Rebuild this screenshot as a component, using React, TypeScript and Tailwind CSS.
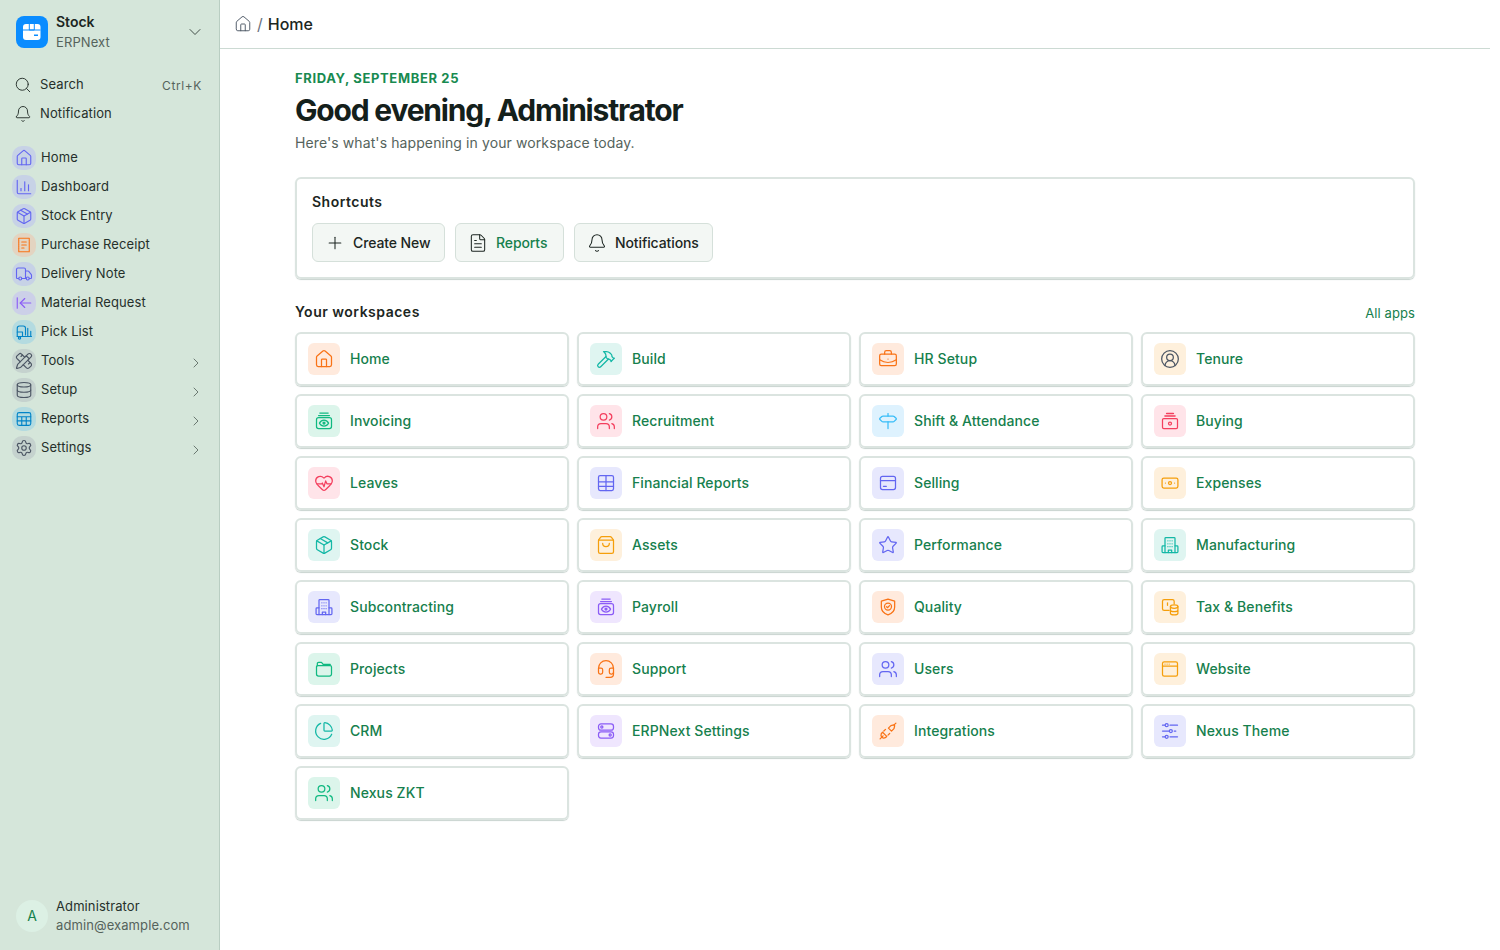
import { ReactNode } from "react";
import {
  ArrowLeftToLine,
  Bell,
  BriefcaseBusiness,
  ChartColumn,
  ChartPie,
  ChevronDown,
  ChevronRight,
  CircleUserRound,
  Database,
  FileText,
  Hammer,
  Headset,
  HeartPulse,
  House,
  Package,
  PencilRuler,
  Plus,
  Search,
  Settings,
  ShoppingBag,
  Signpost,
  Star,
  Truck,
  Users,
} from "lucide-react";

type IconProps = { className?: string; strokeWidth?: number };

function Svg({ className, children }: { className?: string; children: ReactNode }) {
  return (
    <svg
      viewBox="0 0 24 24"
      fill="none"
      stroke="currentColor"
      strokeWidth={1.5}
      strokeLinecap="round"
      strokeLinejoin="round"
      className={className}
    >
      {children}
    </svg>
  );
}

function Logo() {
  return (
    <svg viewBox="0 0 32 32" className="h-8 w-8">
      <rect x="7" y="8" width="17.500" height="16" rx="3" fill="#fff" />
      <path d="M13.300 8v6h5V8" fill="none" stroke="#0a8cff" strokeWidth="1" />
      <path d="M7 14h17.500" stroke="#0a8cff" strokeWidth="1" />
      <rect x="18" y="18.500" width="4" height="1.500" fill="#0a8cff" />
    </svg>
  );
}

function ReceiptIcon({ className }: IconProps) {
  return (
    <Svg className={className}>
      <path d="M5 3h14v18H5z" strokeDasharray="2 0.6" />
      <path d="M9 8h6M9 12h6M9 16h3" />
    </Svg>
  );
}

function PickIcon({ className }: IconProps) {
  return (
    <Svg className={className}>
      <path d="M3 18V7a3 3 0 0 1 3-3h5a3 3 0 0 1 3 3v9" />
      <path d="M3 12h7v6H3" />
      <path d="M17 7v11M21 11v7M5 18h17" />
      <circle cx="6" cy="20" r="1.500" />
    </Svg>
  );
}

function SheetIcon({ className }: IconProps) {
  return (
    <Svg className={className}>
      <rect x="3" y="3.500" width="18" height="17" rx="2.500" />
      <path d="M3 9h18M3 14.500h18M9 9v11.500M15 9v11.500" />
    </Svg>
  );
}

function GridIcon({ className }: IconProps) {
  return (
    <Svg className={className}>
      <rect x="3" y="3" width="18" height="18" rx="2" />
      <path d="M3 10.500h18M3 16h18M12 3v18" />
    </Svg>
  );
}

function CashStackIcon({ className }: IconProps) {
  return (
    <Svg className={className}>
      <path d="M7 2.500h10M5.500 5.500h13" />
      <rect x="3" y="8" width="18" height="13" rx="2.500" />
      <circle cx="12" cy="14.500" r="1.200" fill="currentColor" />
      <path d="M6.500 14.500c1.500-2.500 3.500-3.500 5.500-3.500s4 1 5.500 3.500c-1.500 2.500-3.500 3.500-5.500 3.500s-4-1-5.500-3.500z" />
    </Svg>
  );
}

function BuyingIcon({ className }: IconProps) {
  return (
    <Svg className={className}>
      <path d="M8 3h8M6 6h12" strokeWidth={2} />
      <rect x="3" y="9" width="18" height="12" rx="1.500" />
      <circle cx="12" cy="15" r="1.800" />
    </Svg>
  );
}

function CardIcon({ className }: IconProps) {
  return (
    <Svg className={className}>
      <rect x="3" y="4" width="18" height="16" rx="2.500" />
      <path d="M3 9h18M6.500 16h3.500" />
    </Svg>
  );
}

function MoneyIcon({ className }: IconProps) {
  return (
    <Svg className={className}>
      <rect x="2.500" y="6" width="19" height="12" rx="2" />
      <circle cx="12" cy="12" r="1.800" />
      <path d="M6.500 12h.01M17.500 12h.01" />
    </Svg>
  );
}

function BuildingIcon({ className }: IconProps) {
  return (
    <Svg className={className}>
      <path d="M6 21V4a1 1 0 0 1 1-1h10a1 1 0 0 1 1 1v17" />
      <path d="M6 13H3.500a1 1 0 0 0-1 1v6a1 1 0 0 0 1 1h17a1 1 0 0 0 1-1v-6a1 1 0 0 0-1-1H18" />
      <path d="M9.500 7h.01M14.500 7h.01M9.500 10.500h.01M14.500 10.500h.01M9.500 14h.01M14.500 14h.01M12 7h.01M12 10.500h.01M12 14h.01M10 21v-3h4v3" />
    </Svg>
  );
}

function ShieldIcon({ className }: IconProps) {
  return (
    <Svg className={className}>
      <path d="M12 2.500 20 5v7c0 5-3.500 8-8 9.500C7.500 20 4 17 4 12V5z" />
      <circle cx="12" cy="11.500" r="4.200" />
      <path d="m10.300 11.600 1.300 1.200 2.200-2.400" />
    </Svg>
  );
}

function TaxIcon({ className }: IconProps) {
  return (
    <Svg className={className}>
      <path d="M11 16H5a2 2 0 0 1-2-2V5a2 2 0 0 1 2-2h10a2 2 0 0 1 2 2v3" />
      <path d="M9 7v3" />
      <ellipse cx="17" cy="11.500" rx="4.500" ry="2" />
      <path d="M12.500 11.500v8c0 1.100 2 2 4.500 2s4.500-.9 4.500-2v-8M12.500 15.500c0 1.100 2 2 4.500 2s4.500-.9 4.500-2" />
    </Svg>
  );
}

function WindowIcon({ className }: IconProps) {
  return (
    <Svg className={className}>
      <rect x="3" y="3.500" width="18" height="17" rx="2" />
      <path d="M3 8.500h18M6 6h.01M8.500 6h.01M11 6h.01" />
    </Svg>
  );
}

function TogglesIcon({ className }: IconProps) {
  return (
    <Svg className={className}>
      <rect x="3" y="3.500" width="18" height="7.500" rx="3" />
      <rect x="3" y="13" width="18" height="7.500" rx="3" />
      <circle cx="7" cy="7.200" r="1.300" />
      <circle cx="17" cy="16.800" r="1.300" />
    </Svg>
  );
}

function PlugIcon({ className }: IconProps) {
  return (
    <Svg className={className}>
      <path d="m2.500 21.500 3.600-3.600M21.500 2.500l-2.200 2.200" />
      <path d="m15.500 5.500 3.500-.8 1 1-.8 3.500-3 3-3.700-3.700z" />
      <path d="m5.500 13.500 5 5-1.800 1.500c-1.500.8-3 .4-4-.7-1-1-1.400-2.500-.8-4z" />
      <path d="m7 12 2-2M12 17l2-2" />
    </Svg>
  );
}

function FolderIcon({ className }: IconProps) {
  return (
    <Svg className={className}>
      <path d="M4 8V5.500A1.500 1.500 0 0 1 5.500 4H9l2 2.500h8.500" />
      <path d="M3 9.500A1.500 1.500 0 0 1 4.500 8h15A1.500 1.500 0 0 1 21 9.500V18a2.500 2.500 0 0 1-2.500 2.500h-13A2.500 2.500 0 0 1 3 18z" />
    </Svg>
  );
}

function SlidersIcon({ className }: IconProps) {
  return (
    <Svg className={className}>
      <circle cx="8" cy="5" r="1.800" />
      <circle cx="13" cy="12" r="1.800" />
      <circle cx="8" cy="19" r="1.800" />
      <path d="M3 5h3M12 5h9M3 12h8M17 12h2M3 19h3M12 19h9" />
    </Svg>
  );
}

const sideItems = [
  { label: "Home", Icon: House, tile: "bg-[#c7d2e6]", ink: "text-[#6366f1]" },
  { label: "Dashboard", Icon: ChartColumn, tile: "bg-[#c7d2e6]", ink: "text-[#6366f1]" },
  { label: "Stock Entry", Icon: Package, tile: "bg-[#c7d2e6]", ink: "text-[#6366f1]" },
  { label: "Purchase Receipt", Icon: ReceiptIcon, tile: "bg-[#e3d4c1]", ink: "text-[#f97316]" },
  { label: "Delivery Note", Icon: Truck, tile: "bg-[#c7d2e6]", ink: "text-[#6366f1]" },
  { label: "Material Request", Icon: ArrowLeftToLine, tile: "bg-[#ccd0e8]", ink: "text-[#8b5cf6]" },
  { label: "Pick List", Icon: PickIcon, tile: "bg-[#b4dbe0]", ink: "text-[#0284c7]" },
  { label: "Tools", Icon: PencilRuler, tile: "bg-[#c5d2ce]", ink: "text-[#4b5563]", more: true },
  { label: "Setup", Icon: Database, tile: "bg-[#c5d2ce]", ink: "text-[#4b5563]", more: true },
  { label: "Reports", Icon: SheetIcon, tile: "bg-[#b4dbe0]", ink: "text-[#0284c7]", more: true },
  { label: "Settings", Icon: Settings, tile: "bg-[#c5d2ce]", ink: "text-[#4b5563]", more: true },
];

const orange = { tile: "bg-[#ffeadd]", ink: "text-[#f97316]" };
const teal = { tile: "bg-[#dff5f1]", ink: "text-[#14b8a6]" };
const emerald = { tile: "bg-[#dcf5eb]", ink: "text-[#10b981]" };
const amber = { tile: "bg-[#fef0dc]", ink: "text-[#f59e0b]" };
const rose = { tile: "bg-[#ffe4e9]", ink: "text-[#f43f5e]" };
const indigo = { tile: "bg-[#e7e8fd]", ink: "text-[#6366f1]" };
const violet = { tile: "bg-[#efe6fe]", ink: "text-[#8b5cf6]" };
const sky = { tile: "bg-[#def2fe]", ink: "text-[#38bdf8]" };

const workspaces = [
  { label: "Home", Icon: House, ...orange },
  { label: "Build", Icon: Hammer, ...teal },
  { label: "HR Setup", Icon: BriefcaseBusiness, ...orange },
  { label: "Tenure", Icon: CircleUserRound, tile: "bg-[#fef0dc]", ink: "text-[#4b5563]" },
  { label: "Invoicing", Icon: CashStackIcon, ...emerald },
  { label: "Recruitment", Icon: Users, ...rose },
  { label: "Shift & Attendance", Icon: Signpost, ...sky },
  { label: "Buying", Icon: BuyingIcon, ...rose },
  { label: "Leaves", Icon: HeartPulse, ...rose },
  { label: "Financial Reports", Icon: GridIcon, ...indigo },
  { label: "Selling", Icon: CardIcon, ...indigo },
  { label: "Expenses", Icon: MoneyIcon, ...amber },
  { label: "Stock", Icon: Package, ...teal },
  { label: "Assets", Icon: ShoppingBag, ...amber },
  { label: "Performance", Icon: Star, ...indigo },
  { label: "Manufacturing", Icon: BuildingIcon, ...teal },
  { label: "Subcontracting", Icon: BuildingIcon, ...indigo },
  { label: "Payroll", Icon: CashStackIcon, ...violet },
  { label: "Quality", Icon: ShieldIcon, ...orange },
  { label: "Tax & Benefits", Icon: TaxIcon, ...amber },
  { label: "Projects", Icon: FolderIcon, ...emerald },
  { label: "Support", Icon: Headset, ...orange },
  { label: "Users", Icon: Users, ...indigo },
  { label: "Website", Icon: WindowIcon, ...amber },
  { label: "CRM", Icon: ChartPie, ...teal },
  { label: "ERPNext Settings", Icon: TogglesIcon, ...violet },
  { label: "Integrations", Icon: PlugIcon, ...orange },
  { label: "Nexus Theme", Icon: SlidersIcon, ...indigo },
  { label: "Nexus ZKT", Icon: Users, ...emerald },
];

function Sidebar() {
  return (
    <aside className="flex h-[950px] w-[220px] shrink-0 flex-col justify-between border-r border-[#b9cec2] bg-[#d5e6da] text-[#25302b]">
      <div>
        <div className="flex items-center gap-2 pl-4 pr-[14px] pt-[13px]">
          <div className="h-8 w-8 rounded-lg bg-[#0a8cff]">
            <Logo />
          </div>
          <div className="flex-1 leading-none">
            <div className="text-sm font-semibold leading-[18px] text-[#1c2622]">Stock</div>
            <div className="mt-[3px] text-[13px] leading-4 tracking-[0.1px] text-[#55635c]">ERPNext</div>
          </div>
          <ChevronDown className="h-5 w-5" strokeWidth={1} />
        </div>

        <div className="mt-5 flex h-[29px] items-center gap-2 pl-[14px] pr-[17px] text-[13px] tracking-[0.1px]">
          <Search className="h-[18px] w-[18px]" strokeWidth={1.25} />
          <span className="flex-1">Search</span>
          <span className="mt-[3px] text-xs tracking-[0.6px] text-[#55635c]">Ctrl+K</span>
        </div>
        <div className="flex h-[29px] items-center gap-2 pl-[14px] text-[13px] tracking-[0.1px]">
          <Bell className="h-[18px] w-[18px]" strokeWidth={1.25} />
          <span>Notification</span>
        </div>

        <nav className="mt-[15px] px-3">
          {sideItems.map(({ label, Icon, tile, ink, more }) => (
            <div key={label} className="flex h-[29px] items-center gap-[5px] text-[13px] tracking-[0.1px]">
              <span className={`flex h-6 w-6 items-center justify-center rounded-[10px] ${tile} ${ink}`}>
                <Icon className="h-[18px] w-[18px]" strokeWidth={1.5} />
              </span>
              <span className="flex-1">{label}</span>
              {more && <ChevronRight className="mr-[3px] mt-1 h-4 w-4 text-[#55635c]" strokeWidth={1.25} />}
            </div>
          ))}
        </nav>
      </div>

      <div className="flex items-center gap-2 pb-[15px] pl-4">
        <div className="flex h-8 w-8 items-center justify-center rounded-full bg-[#dcf0e4] text-sm text-[#16804d]">A</div>
        <div className="text-[13px] leading-[19px] tracking-[0.1px]">
          <div className="text-[#25302b]">Administrator</div>
          <div className="text-[#55635c]">admin@example.com</div>
        </div>
      </div>
    </aside>
  );
}

function Shortcut({ icon, label, className }: { icon: ReactNode; label: string; className: string }) {
  return (
    <button className={`flex h-[39px] items-center gap-2 rounded-md border border-[#d5e0da] bg-[#f3f7f4] pl-3 text-sm font-medium tracking-[-0.1px] ${className}`}>
      {icon}
      {label}
    </button>
  );
}

export default function App() {
  return (
    <div className="flex h-[950px] w-[1500px] overflow-hidden bg-white font-['Inter',sans-serif]">
      <Sidebar />
      <main className="w-[1270px]">
        <header className="flex h-[49px] items-center gap-[5px] border-b border-[#ccdad3] pl-[14px] text-[#1c2622]">
          <House className="h-[18px] w-[18px] text-[#4b5563]" strokeWidth={1.25} />
          <span className="text-[#6b7280]">/</span>
          <span className="text-base font-medium">Home</span>
        </header>

        <div className="mx-auto w-[1120px] pt-[21px]">
          <div className="text-[13px] font-bold uppercase leading-4 tracking-[0.65px] text-[#188a50]">Friday, September 25</div>
          <h1 className="mt-[6px] text-[30px] font-bold leading-[36px] tracking-[-1.2px] text-[#14201b]">Good evening, Administrator</h1>
          <p className="mt-[5px] text-sm leading-5 tracking-[0.1px] text-[#55635c]">Here's what's happening in your workspace today.</p>

          <section className="mt-6 rounded-md border-2 border-[#dbe4e0] p-[15px] shadow-[0_1px_1px_#c8d3cf]">
            <h2 className="text-sm font-semibold leading-4 tracking-[0.5px] text-[#1c2622]">Shortcuts</h2>
            <div className="mt-[13px] flex gap-[10px]">
              <Shortcut className="w-[133px] text-[#1c2622]" icon={<Plus className="h-5 w-5" strokeWidth={1.25} />} label="Create New" />
              <Shortcut className="w-[109px] text-[#16804d]" icon={<FileText className="h-5 w-5 text-[#1c2622]" strokeWidth={1.25} />} label="Reports" />
              <Shortcut className="w-[139px] text-[#1c2622]" icon={<Bell className="h-5 w-5" strokeWidth={1.25} />} label="Notifications" />
            </div>
          </section>

          <div className="mt-6 flex items-start justify-between">
            <h2 className="text-sm font-semibold leading-[18px] tracking-[0.5px] text-[#1c2622]">Your workspaces</h2>
            <span className="mt-[1px] text-[13px] leading-[18px] tracking-[0.1px] text-[#16804d]">All apps</span>
          </div>

          <div className="mt-[10px] grid grid-cols-4 gap-2">
            {workspaces.map(({ label, Icon, tile, ink }) => (
              <div
                key={label}
                className="flex h-[54px] items-center gap-[10px] rounded-md border-2 border-[#dbe4e0] pl-[11px] shadow-[0_1px_1px_#c8d3cf]"
              >
                <span className={`flex h-8 w-8 items-center justify-center rounded-md ${tile} ${ink}`}>
                  <Icon className="h-5 w-5" strokeWidth={1.5} />
                </span>
                <span className="text-sm font-medium tracking-[0.1px] text-[#16804d]">{label}</span>
              </div>
            ))}
          </div>
        </div>
      </main>
    </div>
  );
}
